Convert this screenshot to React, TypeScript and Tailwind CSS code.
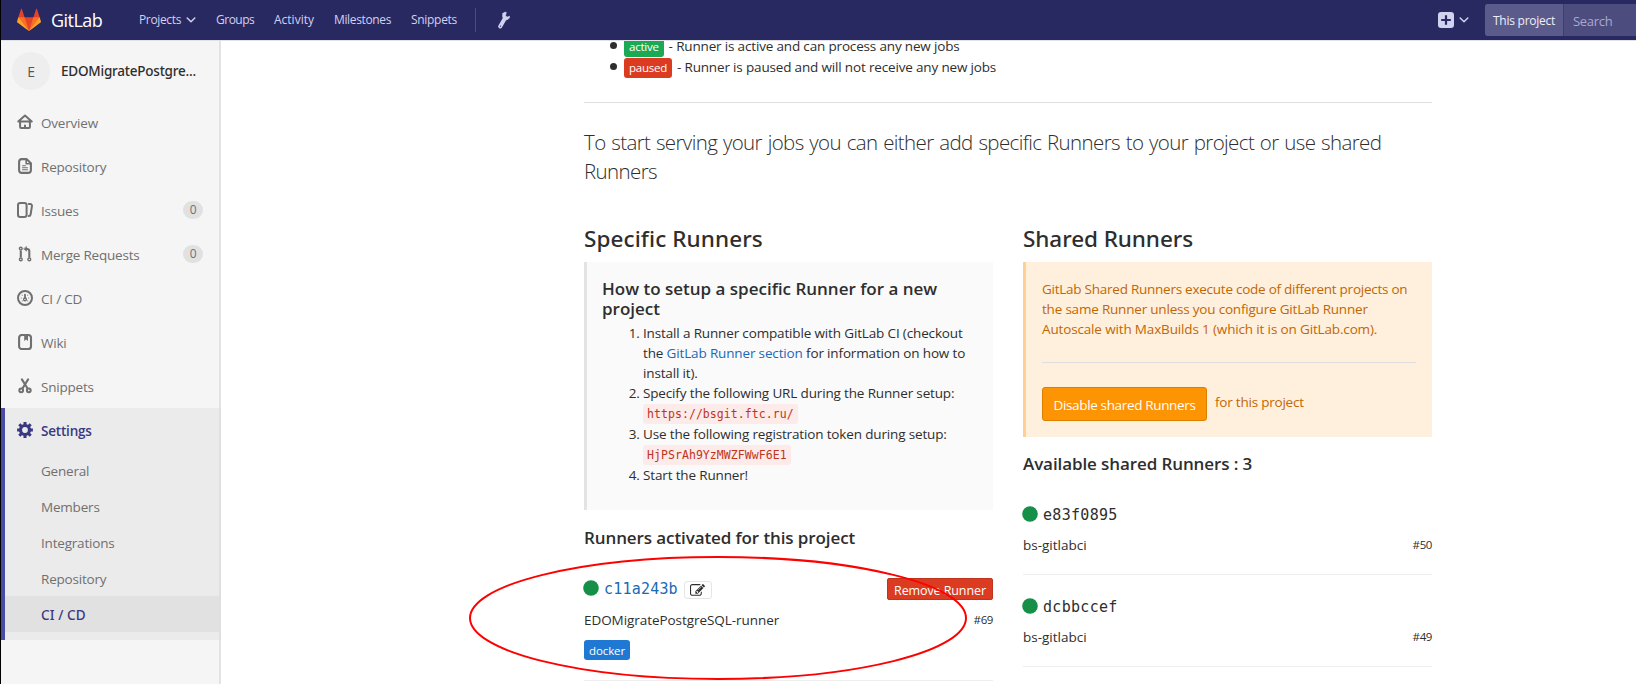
import type { ReactNode } from "react";

const iconStroke = { fill: "none", stroke: "currentColor", strokeWidth: 2, strokeLinejoin: "round", strokeLinecap: "round" } as const;

function Icon({ children }: { children: ReactNode }) {
  return (
    <svg viewBox="0 0 16 16" className="size-4 shrink-0" {...iconStroke}>
      {children}
    </svg>
  );
}

const icons = {
  home: (
    <Icon>
      <path d="M1.3 7.6 L8 1.5 L14.7 7.6 Z" strokeWidth={2} />
      <path d="M3.1 8v5.1a1 1 0 0 0 1 1h7.8a1 1 0 0 0 1-1V8M8 11.5v2" strokeWidth={2} />
    </Icon>
  ),
  doc: (
    <Icon>
      <path d="M4.8 1.1H9.5L13.9 5.2V12.2A2.8 2.8 0 0 1 11.1 14.9H4.8A2.8 2.8 0 0 1 2.1 12.2V3.8A2.8 2.8 0 0 1 4.8 1.1Z" strokeWidth={2.1} />
      <path d="M9.2 1.5V5.8H13.5" strokeWidth={1.6} />
      <path d="M5.5 7.8H8.5M5.5 9.8H10.5M5.5 11.8H10.5" strokeWidth={1.1} />
    </Icon>
  ),
  issues: (
    <Icon>
      <rect x="1" y="1" width="8.6" height="14" rx="2.2" strokeWidth={2} />
      <path d="M11.8 2.1h1.4a1.7 1.7 0 0 1 1.7 2.2l-1.3 8.2a1.8 1.8 0 0 1-1.9 1.5" strokeWidth={2} />
    </Icon>
  ),
  merge: (
    <Icon>
      <circle cx="3.8" cy="2.6" r="1.4" strokeWidth={1.4} />
      <circle cx="3.8" cy="13.4" r="1.4" strokeWidth={1.4} />
      <circle cx="12.3" cy="13.4" r="1.4" strokeWidth={1.4} />
      <path d="M3.8 4.5v7M12.3 11.5V5a2 2 0 0 0-2-2H9" strokeWidth={2.1} strokeLinecap="butt" />
      <path d="M9.6 .8v4.4L6.8 3Z" fill="currentColor" strokeWidth={0.6} />
    </Icon>
  ),
  gauge: (
    <Icon>
      <circle cx="8" cy="8" r="7" strokeWidth={2} />
      <path d="M8 4.7v3.5" strokeWidth={1.8} />
      <circle cx="8" cy="9.4" r="1.4" strokeWidth={1.4} />
      <path d="M4.2 8h.1M11.7 8h.1M5.2 5.2h.1M10.7 5.2h.1M5.2 10.9h.1M10.7 10.9h.1" strokeWidth={1} />
    </Icon>
  ),
  book: (
    <Icon>
      <rect x="2.1" y="1" width="11.9" height="14" rx="2.8" strokeWidth={2.1} />
      <path d="M7.2 1.5h3.8V7L9.1 5.4 7.2 7Z" fill="currentColor" stroke="none" />
    </Icon>
  ),
  scissors: (
    <Icon>
      <path d="M4.9 1.4 10.4 10.2M11.1 1.4 5.6 10.2" strokeWidth={2.1} />
      <circle cx="4.2" cy="12.3" r="1.9" strokeWidth={2} />
      <circle cx="11.8" cy="12.3" r="1.9" strokeWidth={2} />
    </Icon>
  ),
  gear: (
    <Icon>
      <circle cx="8" cy="8" r="4.5" strokeWidth={3.2} />
      <path
        d="M8 .1v3M8 12.9v3M.1 8h3M12.9 8h3M2.3 2.3l2.2 2.2M11.5 11.5l2.2 2.2M2.3 13.7l2.2-2.2M11.5 4.5l2.2-2.2"
        strokeWidth={3}
        strokeLinecap="butt"
      />
    </Icon>
  ),
};

function Chevron() {
  return (
    <svg viewBox="0 0 10 6" className="h-1.5 w-2.5" {...iconStroke}>
      <path d="M1.2 1 5 4.7 8.8 1" strokeWidth={1.5} />
    </svg>
  );
}

function Logo() {
  return (
    <svg viewBox="0 0 36 36" className="size-6">
      <path fill="#e24329" d="M2 14l9.38 9v-9l-4-12.28c-.205-.632-1.176-.632-1.38 0z" />
      <path fill="#e24329" d="M34 14l-9.38 9v-9l4-12.28c.205-.632 1.176-.632 1.38 0z" />
      <path fill="#e24329" d="M18 34.38 3 14h30z" />
      <path fill="#fc6d26" d="M18 34.38 11.38 14H2l4 11z" />
      <path fill="#fc6d26" d="M18 34.38 24.62 14H34l-4 11z" />
      <path fill="#fca326" d="M2 14L.1 20.16c-.18.565 0 1.2.5 1.56l17.42 12.66z" />
      <path fill="#fca326" d="M34 14l1.9 6.16c.18.565 0 1.2-.5 1.56L18 34.38z" />
    </svg>
  );
}

function Header() {
  return (
    <header className="flex h-[41px] shrink-0 items-center border-b border-[#e1e1e8] bg-[#292961] pl-[16px] text-[12px] text-[#d1d1f0]">
      <Logo />
      <span className="ml-[10px] w-[88px] text-[18px] tracking-[-0.55px] text-white">GitLab</span>
      <span className="flex w-[77px] items-center gap-[5px] tracking-[-0.35px]">
        Projects <Chevron />
      </span>
      <span className="w-[58px] tracking-[-0.5px]">Groups</span>
      <span className="w-[60px] tracking-[0px]">Activity</span>
      <span className="w-[77px] tracking-[-0.36px]">Milestones</span>
      <span className="w-[64px] tracking-[-0.3px]">Snippets</span>
      <span className="h-6 w-px bg-[#4a4a85]" />
      <svg viewBox="0 0 12 18" className="ml-[22px] h-[18px] w-3" {...iconStroke}>
        <path d="M2.2 15.4 6.8 7.4" strokeWidth={4} />
        <path
          d="M4.9 2.6C3.9 5 4.6 7.6 7 8.6 9.4 9.4 11.6 7.8 11.8 5.2L9.2 6 7.5 4.9 8.3 1.3C6.7 1.1 5.5 1.5 4.9 2.6Z"
          fill="currentColor"
          strokeWidth={0.6}
        />
        <circle cx="2.4" cy="15.1" r="0.7" fill="#292961" stroke="none" />
      </svg>
      <span className="flex-1" />
      <svg viewBox="0 0 16 16" className="size-4">
        <rect width="16" height="16" rx="3" fill="#d1d1f0" />
        <path d="M8 3.2v9.6M3.2 8h9.6" stroke="#292961" strokeWidth="2.2" />
      </svg>
      <span className="mr-[16px] ml-[5px]">
        <Chevron />
      </span>
      <span className="flex h-8 w-[151px] overflow-hidden rounded-l-[3px] bg-[#4c4c7e]">
        <span className="flex w-[79px] items-center border-r border-[#3e3e72] bg-[#5b5b8b] pt-[1px] pl-[8px] tracking-[-0.25px] text-[#eeeef8]">
          This project
        </span>
        <span className="flex items-center pt-[3px] pl-[9px] text-[13px] tracking-[-0.3px] text-[#a9a9cf]">Search</span>
      </span>
    </header>
  );
}

const nav = [
  { icon: icons.home, label: "Overview" },
  { icon: icons.doc, label: "Repository" },
  { icon: icons.issues, label: "Issues", count: 0 },
  { icon: icons.merge, label: "Merge Requests", count: 0 },
  { icon: icons.gauge, label: "CI / CD" },
  { icon: icons.book, label: "Wiki" },
  { icon: icons.scissors, label: "Snippets" },
];

function Sidebar() {
  return (
    <aside className="w-[220px] shrink-0 border-r-2 border-[#e3e3e3] bg-[#f5f5f5] text-[13.5px] tracking-[-0.2px] text-[#707070]">
      <div className="flex h-[59px] items-center pt-[1px] pl-[11px]">
        <span className="flex size-[38px] items-center justify-center rounded-full bg-[#eeeeee] text-[14px] text-[#555]">E</span>
        <span className="ml-[11px] font-['Noto_Sans'] font-medium tracking-[-0.22px] text-[#2e2e2e]">EDOMigratePostgre...</span>
      </div>
      {nav.map((n) => (
        <div key={n.label} className="flex h-11 items-center pr-[16px] pl-4">
          {n.icon}
          <span className="ml-[8px] flex-1 pt-[2px]">{n.label}</span>
          {n.count !== undefined && (
            <span className="flex h-[18px] w-5 items-center justify-center rounded-full bg-[#e1e1e1] text-[12px]">{n.count}</span>
          )}
        </div>
      ))}
      <div className="-mr-[2px] border-r-2 border-l-4 border-[#dfdfdf] border-l-[#4b4ba3] bg-[#ebebeb] pb-2">
        <div className="flex h-11 items-center pl-3 font-semibold text-[#393982]">
          {icons.gear}
          <span className="ml-[8px] pt-[3px]">Settings</span>
        </div>
        {["General", "Members", "Integrations", "Repository"].map((s) => (
          <div key={s} className="flex h-9 items-center pt-[3px] pl-9">
            {s}
          </div>
        ))}
        <div className="flex h-9 items-center bg-[#e1e1e1] pt-[3px] pl-9 font-['Noto_Sans'] font-medium tracking-[0.1px] text-[#393982]">CI / CD</div>
      </div>
    </aside>
  );
}

function Dot() {
  return (
    <svg viewBox="0 0 16 16" className="mb-[2px] -ml-px size-4">
      <circle cx="8" cy="8" r="7.8" fill="#168f48" />
    </svg>
  );
}

const mono = "font-['DejaVu_Sans_Mono','Liberation_Mono',monospace]";

function Code({ children }: { children: string }) {
  return (
    <div className="flex h-[21px] items-center">
      <code className={`${mono} h-5 rounded-[3px] bg-[#fcebe9] px-1 text-[11.5px] leading-5 tracking-[0.06px] text-[#c0341d]`}>{children}</code>
    </div>
  );
}

function StatusLine({ label, color, text }: { label: string; color: string; text: string }) {
  return (
    <li className="flex h-[21px] items-center">
      <span className="size-[7px] rounded-full bg-[#2e2e2e]" />
      <span className={`${color} mt-[2px] ml-[7px] h-5 rounded-[3px] px-[5px] text-[11.5px] leading-[20px] tracking-[-0.25px] text-white`}>{label}</span>
      <span className="mt-[2px] ml-[5px] tracking-[-0.165px]">{text}</span>
    </li>
  );
}

function SharedRunner({ token, id }: { token: string; id: string }) {
  return (
    <div className="h-[92px] border-b border-[#eeeeee] pt-[21px]">
      <div className="flex h-[22px] items-center gap-[5px]">
        <Dot />
        <span className={`${mono} text-[15px] tracking-[0.3px]`}>{token}</span>
      </div>
      <div className="mt-[9px] flex h-5 items-center justify-between">
        <span>bs-gitlabci</span>
        <span className="text-[11.5px] tracking-[-0.4px]">{id}</span>
      </div>
    </div>
  );
}

function SpecificRunners() {
  return (
    <section className="w-[409px]">
      <h4 className="mb-2 font-['Noto_Sans'] text-[22.5px] leading-[30px] font-medium tracking-[0.1px]">Specific Runners</h4>
      <div className="h-[248px] border-l-[3px] border-[#e3e3e3] bg-[#fafafa] pt-[17px] pl-4">
        <h4 className="-ml-px text-[17px] leading-5 font-semibold">
          How to setup a specific Runner for a new
          <br />
          project
        </h4>
        <ol className="mt-[4px] list-decimal pl-10 leading-5 tracking-[-0.15px]">
          <li>
            Install a Runner compatible with GitLab CI (checkout
            <br />
            the <a className="text-[#1b69b6]">GitLab Runner section</a> for information on how to
            <br />
            install it).
          </li>
          <li>
            Specify the following URL during the Runner setup:
            <Code>https://bsgit.ftc.ru/</Code>
          </li>
          <li>
            Use the following registration token during setup:
            <Code>HjPSrAh9YzMWZFWwF6E1</Code>
          </li>
          <li>Start the Runner!</li>
        </ol>
      </div>
      <h4 className="mt-[18px] text-[17px] leading-5 font-semibold tracking-[-0.1px]">Runners activated for this project</h4>
      <div className="mt-[30px] flex h-[22px] items-center">
        <Dot />
        <span className={`${mono} ml-[5px] text-[15px] tracking-[0.2px] text-[#1b69b6]`}>c11a243b</span>
        <span className="mt-[2px] ml-[6px] flex h-[18px] w-7 items-center justify-center rounded-[3px] border border-[#e5e5e5]">
          <svg viewBox="0 0 1792 1792" className="size-[15px]" fill="#2e2e2e">
            <path d="M888 1184l116-116-152-152-116 116v56h96v96h56zm440-720q-16-16-33 1l-350 350q-17 17-1 33t33-1l350-350q17-17 1-33zm80 594v190q0 119-84.5 203.5t-203.5 84.5h-832q-119 0-203.5-84.5t-84.5-203.5v-832q0-119 84.5-203.5t203.5-84.5h832q63 0 117 25 15 7 18 23 3 17-9 29l-49 49q-14 14-32 8-23-6-45-6h-832q-66 0-113 47t-47 113v832q0 66 47 113t113 47h832q66 0 113-47t47-113v-126q0-13 9-22l64-64q15-15 35-7t20 29zm-96-738l288 288-672 672h-288v-288zm444 132l-92 92-288-288 92-92q28-28 68-28t68 28l152 152q28 28 28 68t-28 68z" />
          </svg>
        </span>
        <span className="ml-auto flex h-[22px] w-[106px] items-center justify-center rounded-[2px] border border-[#c0341d] bg-[#db3b21] pt-[4px] text-[12.5px] tracking-[-0.1px] text-white">
          Remove Runner
        </span>
      </div>
      <div className="mt-[10px] flex h-5 items-center justify-between">
        <span className="tracking-[-0.06px]">EDOMigratePostgreSQL-runner</span>
        <span className="text-[11.5px] tracking-[-0.4px]">#69</span>
      </div>
      <div className="flex h-[51px] border-b border-[#eeeeee] pt-[10px]">
        <span className="h-5 rounded-[3px] bg-[#1f78d1] px-[5px] text-[11.5px] leading-[21px] tracking-[-0.1px] text-white">docker</span>
      </div>
    </section>
  );
}

function SharedRunners() {
  return (
    <section className="w-[409px]">
      <h4 className="mb-2 font-['Noto_Sans'] text-[22.5px] leading-[30px] font-medium tracking-[-0.07px]">Shared Runners</h4>
      <div className="h-[175px] border-l-[3px] border-[#ffcf93] bg-[#fff0de] px-4 pt-[17px] text-[#c26700]">
        <p className="leading-5 tracking-[-0.25px]">
          GitLab Shared Runners execute code of different projects on
          <br />
          <span className="tracking-[-0.2px]">the same Runner unless you configure GitLab Runner</span>
          <br />
          <span className="tracking-[-0.15px]">Autoscale with MaxBuilds 1 (which it is on GitLab.com).</span>
        </p>
        <hr className="mt-[23px] border-[#dfdfdf]" />
        <div className="mt-6 flex">
          <span className="flex h-[34px] w-[165px] items-center justify-center rounded-[3px] border border-[#de7e00] bg-[#fc9403] pt-[3px] tracking-[-0.35px] text-white">
            Disable shared Runners
          </span>
          <span className="ml-2 pt-[5px] leading-5 tracking-[-0.22px]">for this project</span>
        </div>
      </div>
      <h4 className="mt-[17px] mb-[9px] text-[17px] leading-5 font-semibold tracking-[-0.1px]">Available shared Runners : 3</h4>
      <SharedRunner token="e83f0895" id="#50" />
      <SharedRunner token="dcbbccef" id="#49" />
    </section>
  );
}

export default function App() {
  return (
    <div className="relative flex h-[684px] w-[1636px] flex-col overflow-hidden border-l border-black bg-white font-['Open_Sans','Noto_Sans',sans-serif] text-[#2e2e2e]">
      <Header />
      <div className="flex min-h-0 flex-1">
        <Sidebar />
        <div className="flex-1 overflow-hidden pl-[363px]">
          <main className="-mt-[6px] w-[848px] text-[13.5px]">
            <ul className="pl-[26px]">
              <StatusLine label="active" color="bg-[#1aaa55]" text="- Runner is active and can process any new jobs" />
              <StatusLine label="paused" color="bg-[#db3b21]" text="- Runner is paused and will not receive any new jobs" />
            </ul>
            <hr className="mt-[25px] border-[#dfdfdf]" />
            <p className="mt-[25px] text-[20.5px] leading-[29px] font-light tracking-[-0.62px] [word-spacing:1px]">
              To start serving your jobs you can either add specific Runners to your project or use shared
              <br />
              Runners
            </p>
            <div className="mt-[38px] flex justify-between">
              <SpecificRunners />
              <SharedRunners />
            </div>
          </main>
        </div>
      </div>
      <svg viewBox="0 0 500 126" className="pointer-events-none absolute top-[555px] left-[467px] h-[126px] w-[500px]">
        <ellipse cx="250" cy="63" rx="248" ry="61" fill="none" stroke="#fe0000" strokeWidth="2" />
      </svg>
    </div>
  );
}
